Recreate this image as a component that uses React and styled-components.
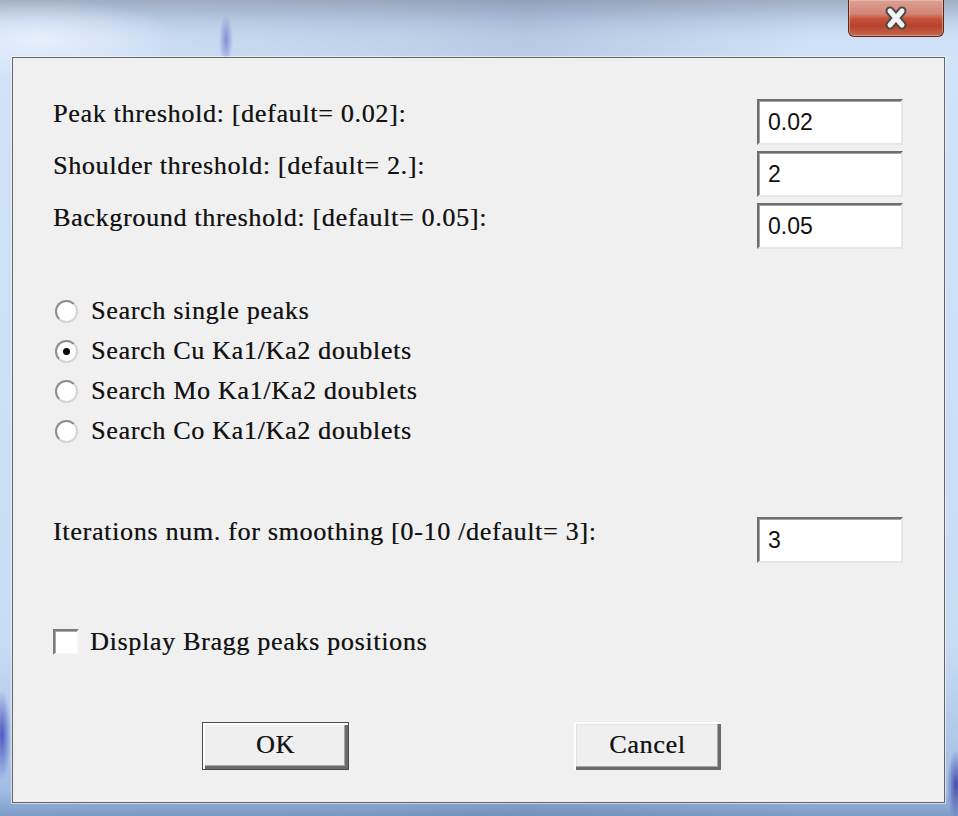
import React from 'react'
import styled, { createGlobalStyle } from 'styled-components'

const GlobalStyle = createGlobalStyle`
  html, body {
    margin: 0;
    padding: 0;
  }
  body {
    width: 958px;
    height: 816px;
    overflow: hidden;
    background: #cfe0f6;
  }
`

const Frame = styled.div`
  width: 958px;
  height: 816px;
  box-sizing: border-box;
  padding: 0 13px 13px 12px;
  display: flex;
  flex-direction: column;
  background:
    radial-gradient(ellipse 7px 26px at 226px 40px, rgba(110, 118, 205, 0.75), rgba(110, 118, 205, 0) 100%),
    radial-gradient(ellipse 9px 45px at 2px 735px, rgba(70, 82, 190, 0.95), rgba(70, 82, 190, 0) 100%),
    radial-gradient(ellipse 9px 35px at 956px 785px, rgba(60, 70, 170, 0.95), rgba(60, 70, 170, 0) 100%),
    radial-gradient(ellipse 140px 40px at 40px 40px, rgba(232, 240, 252, 0.9), rgba(232, 240, 252, 0) 100%),
    linear-gradient(90deg, rgba(0, 0, 0, 0) 0%, rgba(90, 110, 150, 0.12) 40%, rgba(60, 80, 130, 0.16) 55%, rgba(0, 0, 0, 0) 85%),
    linear-gradient(180deg, #a3b0c4 0px, #aebed6 10px, #c0d2ea 22px, #cddff5 36px, #d2e3f8 57px, #c9dcf5 640px, #a2bde3 790px, #7d9cc9 816px);
`

const TitleBar = styled.div`
  height: 57px;
  flex: none;
  display: flex;
  justify-content: flex-end;
  align-items: flex-start;
`

const CloseButton = styled.div`
  width: 96px;
  height: 37px;
  margin-right: 1px;
  box-sizing: border-box;
  border: 1px solid #5a261d;
  border-top: none;
  border-radius: 0 0 6px 6px;
  display: flex;
  align-items: center;
  justify-content: center;
  background: linear-gradient(180deg, #dba093 0%, #d28676 38%, #c4533c 52%, #b8412b 72%, #c46850 100%);
  box-shadow: inset 0 0 0 1px rgba(255, 210, 200, 0.45);
`

const Panel = styled.div`
  flex: 1;
  box-sizing: border-box;
  background: #f0f0f0;
  border: 1px solid #646464;
  box-shadow: 0 0 0 1px rgba(255, 255, 255, 0.55);
  padding: 41px 41px 0 40px;
  display: flex;
  flex-direction: column;
  font-family: "Liberation Serif", "Times New Roman", serif;
  font-size: 26px;
  letter-spacing: 0.7px;
  color: #121212;
  text-shadow: 0.4px 0 0 rgba(18, 18, 18, 0.6);
`

const Fields = styled.div`
  display: flex;
  flex-direction: column;
  gap: 6px;
`

const FieldRow = styled.div`
  display: flex;
  justify-content: space-between;
  align-items: flex-start;
  margin-top: ${p => p.$top || 0}px;
`

const Label = styled.span`
  line-height: 30px;
  white-space: nowrap;
`

const TextBox = styled.input`
  width: 146px;
  height: 46px;
  box-sizing: border-box;
  margin: 0;
  padding: 0 0 0 9px;
  background: #ffffff;
  border: 2px solid;
  border-color: #6e6e6e #e6e6e6 #e6e6e6 #6e6e6e;
  box-shadow: inset 1px 1px 0 #a3a3a3;
  font-family: "Liberation Sans", Arial, sans-serif;
  font-size: 23px;
  color: #111;
  outline: none;
`

const RadioGroup = styled.div`
  margin-top: 42px;
  display: flex;
  flex-direction: column;
`

const OptionRow = styled.label`
  height: 40px;
  display: flex;
  align-items: center;
  gap: ${p => p.$gap}px;
  line-height: 40px;
  white-space: nowrap;
`

const RadioMark = styled.span`
  width: 23px;
  height: 23px;
  margin-left: 2px;
  box-sizing: border-box;
  border-radius: 50%;
  border: 2px solid #8c8c8c;
  border-right-color: #d4d4d4;
  border-bottom-color: #d4d4d4;
  background: #ffffff;
  display: flex;
  align-items: center;
  justify-content: center;
  &::after {
    content: '';
    width: 7px;
    height: 7px;
    border-radius: 50%;
    background: #0a0a0a;
    display: ${p => (p.$checked ? 'block' : 'none')};
  }
`

const CheckRow = styled(OptionRow)`
  margin-top: 59px;
`

const CheckMark = styled.span`
  width: 26px;
  height: 26px;
  box-sizing: border-box;
  background: #ffffff;
  border: 2px solid;
  border-color: #7a7a7a #f4f4f4 #f4f4f4 #7a7a7a;
  box-shadow: inset 1px 1px 0 #a8a8a8;
`

const ButtonRow = styled.div`
  margin-top: 60px;
  padding-left: 149px;
  display: flex;
  gap: 225px;
`

const Button = styled.div`
  width: 147px;
  height: 48px;
  box-sizing: border-box;
  display: flex;
  align-items: center;
  justify-content: center;
  background: #efefef;
  border: ${p => (p.$default ? '1px solid #4a4a4a' : '0')};
  box-shadow: ${p =>
    p.$default
      ? 'inset 2px 2px 0 #ffffff, inset -3px -3px 0 #6a6a6a, inset -4px -4px 0 #a8a8a8'
      : 'inset 2px 2px 0 #ffffff, inset -3px -3px 0 #6a6a6a, inset -4px -4px 0 #a8a8a8, inset 3px 3px 0 #e2e2e2'};
  line-height: 1;
  padding-bottom: 2px;
`

const options = [
  'Search single peaks',
  'Search Cu Ka1/Ka2 doublets',
  'Search Mo Ka1/Ka2 doublets',
  'Search Co Ka1/Ka2 doublets',
]

const thresholds = [
  { label: 'Peak threshold: [default= 0.02]:', value: '0.02' },
  { label: 'Shoulder threshold: [default= 2.]:', value: '2' },
  { label: 'Background threshold: [default= 0.05]:', value: '0.05' },
]

const CloseGlyph = () => (
  <svg width="28" height="24" viewBox="0 0 28 24">
    <path d="M8 5 L20 19 M20 5 L8 19" stroke="#4a4a4a" strokeWidth="9" strokeLinecap="round" />
    <path d="M8 5 L20 19 M20 5 L8 19" stroke="#f4f4f4" strokeWidth="5" strokeLinecap="round" />
  </svg>
)

export default function App() {
  return (
    <>
      <GlobalStyle />
      <Frame>
        <TitleBar>
          <CloseButton>
            <CloseGlyph />
          </CloseButton>
        </TitleBar>
        <Panel>
          <Fields>
            {thresholds.map(t => (
              <FieldRow key={t.label}>
                <Label>{t.label}</Label>
                <TextBox defaultValue={t.value} readOnly />
              </FieldRow>
            ))}
          </Fields>
          <RadioGroup>
            {options.map((o, i) => (
              <OptionRow key={o} $gap={13}>
                <RadioMark $checked={i === 1} />
                <span>{o}</span>
              </OptionRow>
            ))}
          </RadioGroup>
          <FieldRow $top={66}>
            <Label>Iterations num. for smoothing [0-10 /default= 3]:</Label>
            <TextBox defaultValue="3" readOnly />
          </FieldRow>
          <CheckRow $gap={11}>
            <CheckMark />
            <span>Display Bragg peaks positions</span>
          </CheckRow>
          <ButtonRow>
            <Button $default>OK</Button>
            <Button>Cancel</Button>
          </ButtonRow>
        </Panel>
      </Frame>
    </>
  )
}
